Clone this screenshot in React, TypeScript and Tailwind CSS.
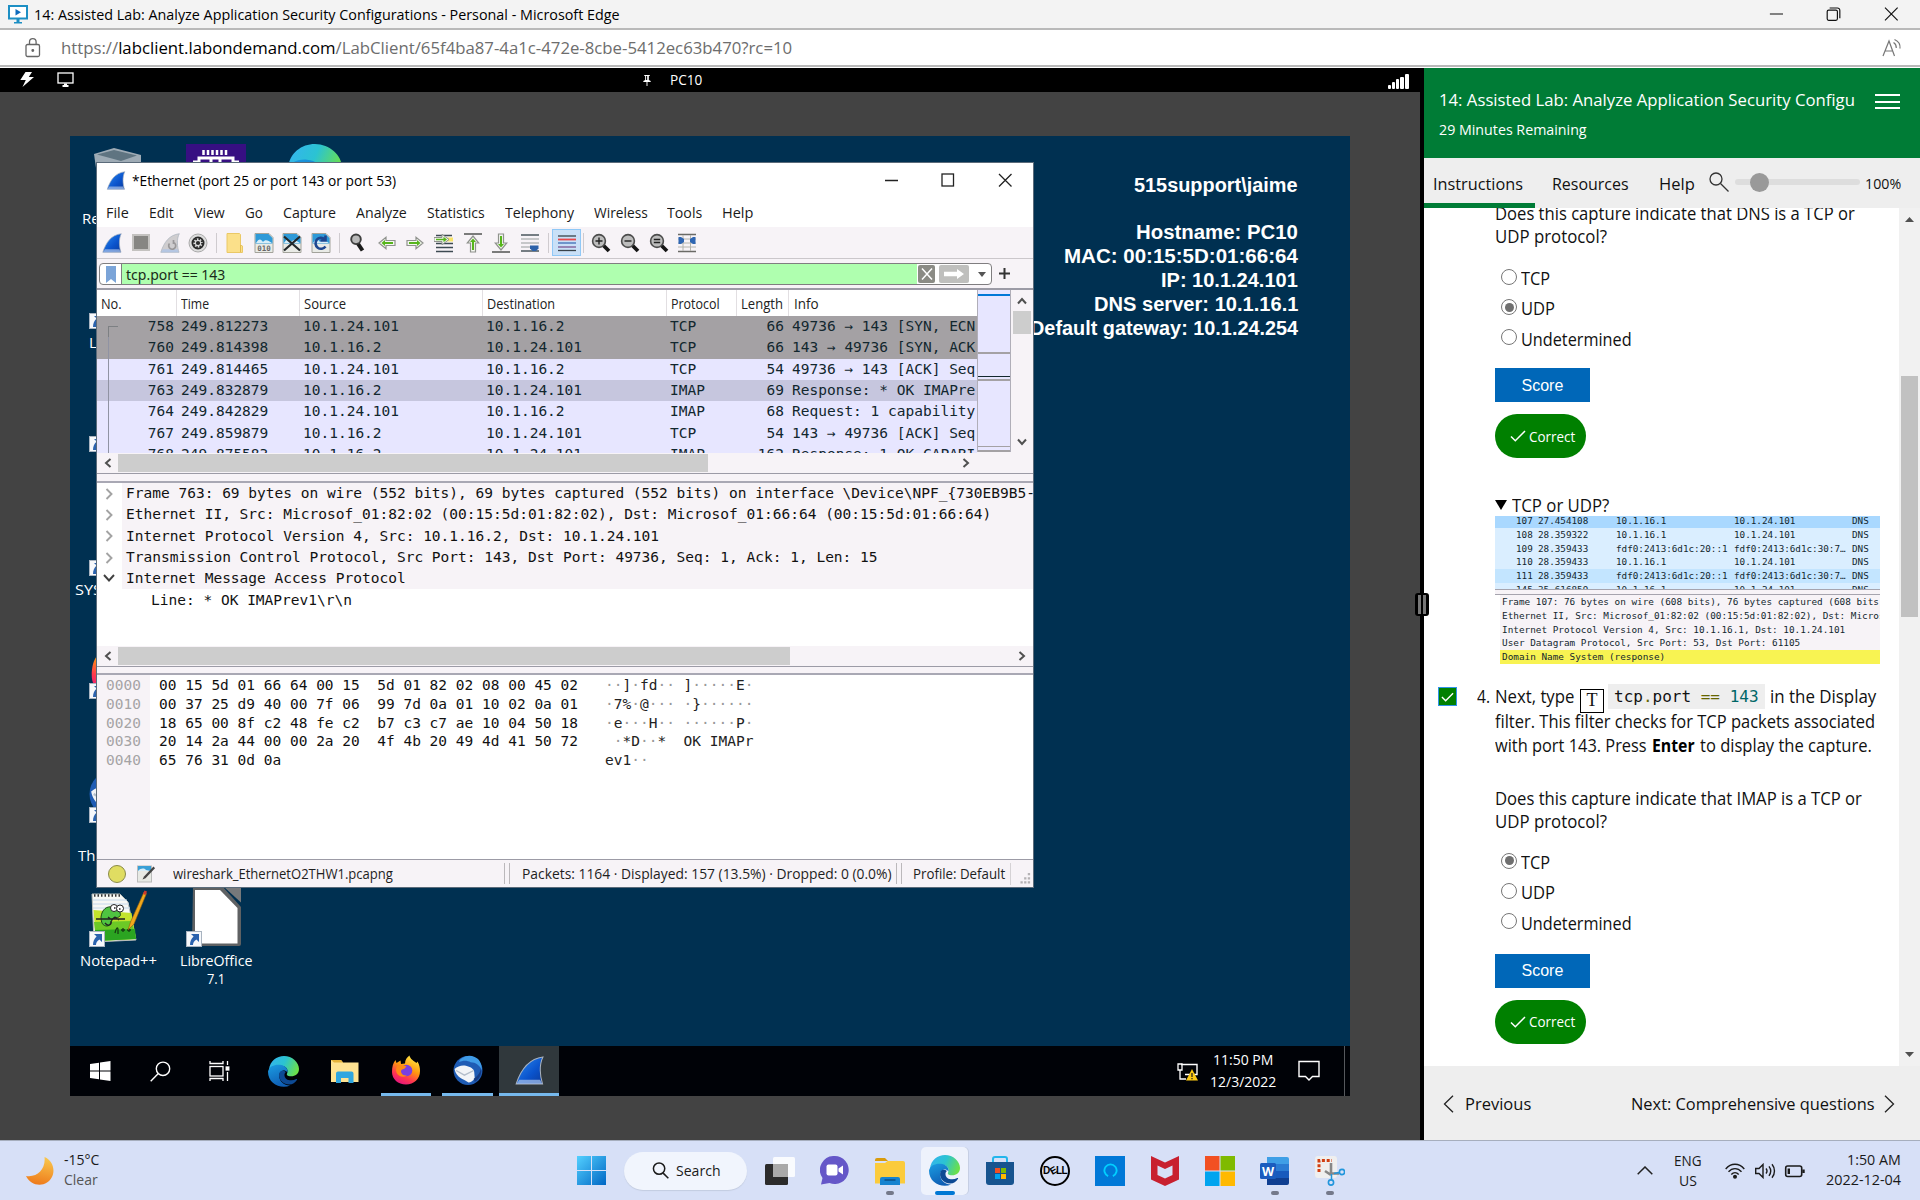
import React, { useLayoutEffect, useRef, useState, type ReactNode } from "react";

/* Text squeezed or stretched horizontally to the width of its box. */
function T({ c = "", o = "origin-left", children }: { c?: string; o?: string; children: ReactNode }) {
  const box = useRef<HTMLSpanElement>(null);
  const inner = useRef<HTMLSpanElement>(null);
  const [scale, setScale] = useState(1);
  useLayoutEffect(() => {
    if (!box.current || !inner.current) return;
    const natural = inner.current.offsetWidth;
    if (natural > 0) setScale(box.current.getBoundingClientRect().width / natural);
  }, []);
  return (
    <span ref={box} className={"inline-flex shrink-0 whitespace-pre " + c}>
      <span ref={inner} className={"inline-block shrink-0 " + o} style={{ transform: `scaleX(${scale})` }}>
        {children}
      </span>
    </span>
  );
}

const MONO = "font-['DejaVu_Sans_Mono','Liberation_Mono',monospace]";
const SANS = "font-['Open_Sans','Noto_Sans',sans-serif]";

/* ---------- shared icons ---------- */

function EdgeIcon({ c }: { c: string }) {
  return (
    <svg viewBox="0 0 32 32" className={c}>
      <defs>
        <linearGradient id="eg1" x1="0" y1="0.2" x2="1" y2="0.5">
          <stop offset="0" stopColor="#34b4ee" />
          <stop offset="0.5" stopColor="#2bc3d2" />
          <stop offset="1" stopColor="#6be04a" />
        </linearGradient>
        <linearGradient id="eg2" x1="0" y1="0" x2="0.4" y2="1">
          <stop offset="0" stopColor="#1b9de2" />
          <stop offset="1" stopColor="#0f5fb5" />
        </linearGradient>
      </defs>
      <path d="M1 14C2 5 9 0 16.500 0 25 0 32 6.500 32 13.500c0 5-4 7.500-8 7.500-4.500 0-5-2-4.300-3C21 16 20.500 10 13 10 7 10 2 13 1 20z" fill="url(#eg1)" />
      <path d="M0 16C1 10.500 7 8.500 12 9c6 .5 9 4.500 8 8-3-4-8.500-1.500-8.500 3.500C11.500 27 18 31 23 30.500 13 34.500 0 29 0 16z" fill="url(#eg2)" />
      <path d="M12 17c-2.500 6 3 12.500 10 12.500 3.500 0 6-2 8-5 .3-.6-.2-1-.8-.7C24 26.500 17 25 17 19.500c0-1.500.6-2.300 1.600-3C16 14.500 13 15 12 17z" fill="#0d4a94" />
    </svg>
  );
}

function Fin({ c, tone = "blue" }: { c: string; tone?: "blue" | "gray" }) {
  const fill = tone === "blue" ? "url(#fin)" : "#cfcdcf";
  return (
    <svg viewBox="0 0 20 20" className={c}>
      <defs>
        <linearGradient id="fin" x1="0" y1="0" x2="1" y2="1">
          <stop offset="0" stopColor="#2b8cf0" />
          <stop offset="0.6" stopColor="#0a53cc" />
          <stop offset="1" stopColor="#0c3a9a" />
        </linearGradient>
      </defs>
      <path d="M.8 19.300C4 9.500 9 2 19.300.7 16.500 6 17.200 14 19 19.300z" fill={fill} stroke="#a9b2bd" strokeWidth="0.7" />
      <path d="M1 19.300l2-3h14.300l1.500 3z" fill="#a9c3ea" opacity="0.7" />
      {tone === "gray" && <path d="M13.500 9.500a3.500 3.500 0 1 1-4 1M13.500 7v4" fill="none" stroke="#9a989a" strokeWidth="1.700" />}
    </svg>
  );
}

function FirefoxIcon({ c }: { c: string }) {
  return (
    <svg viewBox="0 0 30 30" className={c}>
      <defs>
        <linearGradient id="ff" x1="0.8" y1="0" x2="0.3" y2="1">
          <stop offset="0" stopColor="#fff04a" />
          <stop offset="0.45" stopColor="#ff980e" />
          <stop offset="0.75" stopColor="#ff3750" />
          <stop offset="1" stopColor="#e5147f" />
        </linearGradient>
      </defs>
      <path d="M1 17C1 12 2 8 4.500 5l1 3 4-2.500.5 3.500 4-.5C14 5 16 2 18.500.5 19 4 23 6 25.500 8l1-1.500C28.500 10 29 13 29 16c0 8-6 13.500-14 13.500S1 24 1 17z" fill="url(#ff)" />
      <circle cx="15.500" cy="15.500" r="5.800" fill="#7a3fe0" />
      <path d="M6 11c3-2 7-1 9.500.5L13 14c-2 0-3 1-3 2.500 0 3 3 4.500 6 4-5 3-11 0-11-6z" fill="#ff8a16" />
    </svg>
  );
}

function ThunderbirdIcon({ c }: { c: string }) {
  return (
    <svg viewBox="0 0 30 30" className={c}>
      <circle cx="15.500" cy="15" r="14" fill="#1f5cb4" />
      <path d="M10 3C14 0 18 0 22 2c5 2 7 7 7 13-2-5-6-8-11-8-3-2-8-2-11 0 0-2 1-3 3-4z" fill="#3f9be6" />
      <path d="M2.500 13.500c3-2.500 7-4 11-3 4 1 8 3 8 6l.5 6c-2 3-4 4-6 4C11 23 4 22 2.500 13.500z" fill="#f2f4f7" />
      <path d="M4 15l8 4.500L21 15" fill="none" stroke="#b3bdca" strokeWidth="1.300" />
      <path d="M22 26c5-3 7-8 6-13-1 5-4 8-7 10z" fill="#163b82" />
    </svg>
  );
}

function ShortcutBadge({ c }: { c: string }) {
  return (
    <svg viewBox="0 0 16 16" className={c}>
      <rect x=".5" y=".5" width="15" height="15" fill="#f6f8fb" stroke="#a8b3c0" />
      <path d="M5 3h8v8l-2.600-2.600C8 10 7 11.500 7 14H4c0-3.500 1.200-6 3.600-8.400z" fill="#2a62ae" />
    </svg>
  );
}

/* ---------- Edge window chrome ---------- */

function BrowserChrome() {
  return (
    <div className="h-[68px] shrink-0">
      <div className="flex h-[28px] items-center bg-[#f3f3f3] pl-[8px]">
        <svg viewBox="0 0 20 19" className="h-[19px] w-[20px]">
          <rect x="1" y="1" width="18" height="12.500" fill="#fff" stroke="#1d8fc4" strokeWidth="2" />
          <path d="M7.500 4v6.500l5.500-3.200z" fill="#0f6cbd" />
          <path d="M8.500 14h3v3h2.500v1.500H6V17h2.500z" fill="#1d8fc4" />
        </svg>
        <T c="ml-[6px] w-[586px] text-[15px] text-black">14: Assisted Lab: Analyze Application Security Configurations - Personal - Microsoft Edge</T>
        <svg viewBox="0 0 140 20" className="ml-auto mr-[18px] h-[20px] w-[136px]" fill="none" stroke="#111" strokeWidth="1.200">
          <path d="M4 10h13.500M122.500 3.500l13 13M135.500 3.500l-13 13" />
          <rect x="63" y="6" width="10.500" height="10.500" rx="1.500" />
          <path d="M65.500 3.800h8a2.500 2.500 0 0 1 2.500 2.500v8" />
        </svg>
      </div>
      <div className="h-[2px] bg-[#b9b9b9]" />
      <div className="flex h-[35px] items-center bg-white pl-[25px]">
        <svg viewBox="0 0 16 20" className="h-[20px] w-[16px]" fill="none" stroke="#666" strokeWidth="1.300">
          <rect x="1" y="6.500" width="13.500" height="12" rx="1.500" />
          <path d="M4.500 6.500V4a3.300 3.300 0 0 1 6.600 0v2.500" />
          <circle cx="7.800" cy="12.500" r="0.800" fill="#666" />
        </svg>
        <T c="ml-[20px] mt-px w-[731px] text-[16.500px] text-[#6d6d6d]">
          https://<span className="text-black">labclient.labondemand.com</span>/LabClient/65f4ba87-4a1c-472e-8cbe-5412ec63b470?rc=10
        </T>
        <svg viewBox="0 0 20 19" className="ml-auto mr-[18px] h-[19px] w-[20px]" fill="none" stroke="#777" strokeWidth="1.200">
          <path d="M1 18L7 3l5.500 15M3 13h7.500M11.500 4.500c1.800 1 2.800 3 2.800 5.500M12.500 1.500c3.500 1.500 6 4.500 5.500 9" />
        </svg>
      </div>
      <div className="h-[2px] bg-[#b9b9b9]" />
      <div className="h-[1px] bg-white" />
    </div>
  );
}

function VmBar() {
  return (
    <div className="flex h-[24px] shrink-0 items-center bg-black pb-[2px] text-white">
      <svg viewBox="0 0 14 15" className="ml-[20px] h-[15px] w-[14px]">
        <path d="M5.500 0H12L8.800 5H14L2.500 15 5.800 8H.3z" fill="#fff" />
      </svg>
      <svg viewBox="0 0 17 15" className="ml-[23px] h-[15px] w-[17px]" fill="none" stroke="#fff" strokeWidth="1.300">
        <rect x="1" y="1" width="15" height="10" />
        <path d="M5.500 14h6M7 12.500h3" strokeWidth="1.800" />
      </svg>
      <svg viewBox="0 0 10 12" className="ml-[568px] mt-[2px] h-[11px] w-[10px]">
        <path d="M2 0h6v1H7v4.500l2 1v1.200H5.500V12h-1V7.700H1V6.500l2-1V1H2z" fill="#fff" />
        <path d="M4 1h1.200v4.500H4z" fill="#000" />
      </svg>
      <T c="ml-[18px] w-[32px] text-[14px]">PC10</T>
      <div className="ml-auto mr-[12px] mt-[3px] flex h-[16px] items-end gap-[1px]">
        <i className="h-[4px] w-[3px] rounded-[1px] bg-white" />
        <i className="h-[7px] w-[3px] rounded-[1px] bg-white" />
        <i className="h-[10px] w-[3px] rounded-[1px] bg-white" />
        <i className="h-[12px] w-[4px] rounded-[1px] bg-white" />
        <i className="h-[15px] w-[4px] rounded-[1px] bg-white" />
      </div>
      <div className="w-[3px]" />
    </div>
  );
}

/* ---------- Wireshark ---------- */

const menu: [string, string][] = [
  ["File", "w-[23px]"],
  ["Edit", "w-[25px]"],
  ["View", "w-[31px]"],
  ["Go", "w-[18px]"],
  ["Capture", "w-[53px]"],
  ["Analyze", "w-[51px]"],
  ["Statistics", "w-[58px]"],
  ["Telephony", "w-[69px]"],
  ["Wireless", "w-[54px]"],
  ["Tools", "w-[35px]"],
  ["Help", "w-[31px]"],
];

function Slot({ children, on }: { children: ReactNode; on?: boolean }) {
  return (
    <div className={"flex h-[27px] w-[28.700px] shrink-0 items-center justify-center " + (on ? "border border-[#90c8f6] bg-[#c9e0f7]" : "")}>
      {children}
    </div>
  );
}
function Sep() {
  return (
    <div className="flex h-[20px] w-[8px] shrink-0 justify-center">
      <i className="w-[1px] bg-[#cfcbcf]" />
    </div>
  );
}
const ic = "h-[20px] w-[20px]";

function Doc({ kind }: { kind: "bin" | "x" | "reload" }) {
  return (
    <svg viewBox="0 0 20 20" className={ic}>
      <path d="M1 .5h14l4 4v15H1z" fill="#e9ebe6" stroke="#a3a39b" />
      <path d="M1.500 1h13l4 4v5.500h-17z" fill="#2f9ad8" />
      <path d="M2 10c3-5 5-4 7-1 2-3 5-2 9 1z" fill="#d8edf8" />
      {kind === "bin" && (
        <text x="10" y="17.500" fontSize="7.500" textAnchor="middle" fontWeight="bold" fill="#666" fontFamily="DejaVu Sans Mono">010</text>
      )}
      {kind === "x" && <path d="M2 3.500l16 14M18 3.500l-16 14" stroke="#22282b" strokeWidth="2.200" />}
      {kind === "reload" && <path d="M14.500 13.500a5.500 5.500 0 1 1-1-7.500M14.500 2.500v5h-5" fill="none" stroke="#1d4790" strokeWidth="2.600" />}
    </svg>
  );
}

function Arrow({ dir }: { dir: "left" | "right" | "up" | "down" }) {
  const rot = { left: "rotate-180", right: "rotate-0", up: "-rotate-90", down: "rotate-90" }[dir];
  return (
    <svg viewBox="0 0 18 14" className={"h-[14px] w-[18px] shrink-0 " + rot}>
      <path d="M1 4.500h9V1.300L17 7l-7 5.700V9.500H1z" fill="#f4f7f0" stroke="#8f928d" strokeWidth="1.200" />
      <path d="M3 6h8V4l3.500 3L11 10V8H3z" fill="#57b51c" />
    </svg>
  );
}

function Lens({ kind }: { kind: "in" | "out" | "eq" }) {
  return (
    <svg viewBox="0 0 20 20" className={ic} fill="none">
      <path d="M12 12l6 6" stroke="#151515" strokeWidth="3.800" />
      <circle cx="8" cy="8" r="6.400" fill="#bdbdbd" stroke="#4c4c4c" strokeWidth="1.600" />
      <path d={kind === "in" ? "M4.500 8h7M8 4.500v7" : kind === "out" ? "M4.500 8h7" : "M4.800 6.500h6.400M4.800 9.500h6.400"} stroke="#222" strokeWidth="1.400" />
    </svg>
  );
}

function Toolbar() {
  return (
    <div className="flex h-[31px] shrink-0 items-center bg-[#f7f3f7] pl-px">
      <Slot><Fin c={ic} /></Slot>
      <Slot><i className="h-[17px] w-[18px] border-2 border-[#c4c2c0] bg-[#878683]" /></Slot>
      <Slot><Fin c={ic} tone="gray" /></Slot>
      <Slot>
        <svg viewBox="0 0 20 20" className={ic} fill="none">
          <circle cx="10" cy="10" r="9" fill="#ddd" stroke="#aaa" />
          <circle cx="10" cy="10" r="5.600" stroke="#2a2a2a" strokeWidth="1.800" />
          <circle cx="10" cy="10" r="4.200" stroke="#2a2a2a" strokeWidth="2" strokeDasharray="1.600 1.700" />
          <circle cx="10" cy="10" r="2.100" fill="#2a2a2a" />
        </svg>
      </Slot>
      <Sep />
      <Slot>
        <svg viewBox="0 0 18 20" className="h-[20px] w-[18px]">
          <path d="M1 .5h12.500l1 1V12l2 1v6.500H1z" fill="#fbe08a" stroke="#eac866" />
          <path d="M14.500 12v7" stroke="#e2bb4f" />
        </svg>
      </Slot>
      <Slot><Doc kind="bin" /></Slot>
      <Slot><Doc kind="x" /></Slot>
      <Slot><Doc kind="reload" /></Slot>
      <Sep />
      <Slot>
        <svg viewBox="0 0 20 20" className={ic}>
          <path d="M9.500 10l5 7.500" stroke="#1b1b1b" strokeWidth="4" />
          <circle cx="8" cy="6.300" r="4.800" fill="#b9b9b9" stroke="#3e3e3e" strokeWidth="1.900" />
        </svg>
      </Slot>
      <Slot><Arrow dir="left" /></Slot>
      <Slot><Arrow dir="right" /></Slot>
      <Slot>
        <svg viewBox="0 0 20 20" className={ic}>
          <path d="M2 2.500h16M2 14.500h17M2 18.500h17M2 10.500h17" stroke="#3d4a52" strokeWidth="1.300" />
          <path d="M12 4.500h7v4h-7z" fill="#f8e46a" />
          <path d="M0 4.500h8V1.300L15 6.500l-7 5.200V8.500H0z" fill="#f4f7f0" stroke="#8f928d" />
          <path d="M2 5.700h7.500v-2L13 6.500 9.500 9.300v-2H2z" fill="#57b51c" />
        </svg>
      </Slot>
      <Slot>
        <div className="flex h-[20px] flex-col items-center">
          <i className="h-[2px] w-[18px] bg-[#7b7b7b]" />
          <div className="flex h-[18px] w-[18px] items-center justify-center"><Arrow dir="up" /></div>
        </div>
      </Slot>
      <Slot>
        <div className="flex h-[20px] flex-col items-center">
          <div className="flex h-[18px] w-[18px] items-center justify-center"><Arrow dir="down" /></div>
          <i className="h-[2px] w-[18px] bg-[#7b7b7b]" />
        </div>
      </Slot>
      <Slot>
        <svg viewBox="0 0 20 20" className={ic}>
          <path d="M1 2h18" stroke="#4a565c" strokeWidth="1.500" />
          <path d="M1 6h18M1 10h18M1 14h10" stroke="#b7b9ba" strokeWidth="1.500" />
          <path d="M1 18h18" stroke="#4a565c" strokeWidth="1.500" />
          <path d="M10 12.500h8.500v3L16 18h-3.500L10 15.500z" fill="#2d62aa" />
        </svg>
      </Slot>
      <Sep />
      <Slot on>
        <svg viewBox="0 0 20 20" className={ic} strokeWidth="1.300">
          <path d="M1 3h18" stroke="#38434a" />
          <path d="M1 6.500h18" stroke="#e8474b" strokeWidth="1.800" />
          <path d="M1 10h18" stroke="#3d6cb4" />
          <path d="M1 14h18" stroke="#7a5591" />
          <path d="M1 17.500h18" stroke="#38434a" />
        </svg>
      </Slot>
      <div className="-ml-[2px] flex items-center">
        <Sep />
        <Slot><Lens kind="in" /></Slot>
        <Slot><Lens kind="out" /></Slot>
        <Slot><Lens kind="eq" /></Slot>
        <Slot>
          <svg viewBox="0 0 20 20" className={ic}>
            <path d="M1 1.500h18M1 18.500h18" stroke="#6a6a66" strokeWidth="1.400" />
            <path d="M1 6h18M1 10h18M1 14h18M6 2v16M13.500 2v16" stroke="#b4b4ae" />
            <path d="M1.500 4v7h2.500L7 9V6L4 4zM18.500 4v7H16l-3-2V6l3-2z" fill="#2f66b3" />
          </svg>
        </Slot>
      </div>
    </div>
  );
}

function FilterRow() {
  return (
    <div className="flex h-[30px] shrink-0 border-t border-[#cbc7cb] bg-[#f7f3f7] pl-[2px] pt-[4px]">
      <div className="flex h-[22px] w-[893px] overflow-hidden rounded-[4px] border border-[#807e80] bg-white">
        <div className="flex w-[22px] shrink-0 items-center justify-center border-r border-[#807e80]">
          <svg viewBox="0 0 10 17" className="h-[17px] w-[10px]"><path d="M0 0h10v17l-5-4-5 4z" fill="#7ba4d8" /></svg>
        </div>
        <div className="flex w-[795px] shrink-0 items-center bg-[#afffaf] pl-[4px]">
          <T c="w-[99px] text-[14px] text-[#1a2b1a] font-['Noto_Sans',sans-serif]">tcp.port == 143</T>
        </div>
        <div className="ml-[1px] mt-[1px] flex h-[18px] w-[17px] shrink-0 items-center justify-center rounded-[2px] bg-[#8b8b85]">
          <svg viewBox="0 0 14 14" className="h-[14px] w-[14px]"><path d="M2 1.500l10 11M12 1.500L2 12.500" stroke="#fff" strokeWidth="1.500" /></svg>
        </div>
        <div className="ml-[4px] mt-[1px] flex h-[18px] w-[30px] shrink-0 items-center justify-center rounded-[2px] bg-[#bfbfbd]">
          <svg viewBox="0 0 22 10" className="h-[10px] w-[22px]"><path d="M1 2.800h13V0l7 5-7 5V7.200H1z" fill="#fff" /></svg>
        </div>
        <div className="flex w-[22px] shrink-0 items-center justify-center pl-[4px]">
          <svg viewBox="0 0 8 5" className="h-[5px] w-[8px]"><path d="M0 0h8L4 5z" fill="#555" /></svg>
        </div>
      </div>
      <svg viewBox="0 0 11 11" className="ml-[7px] mt-[5px] h-[11px] w-[11px]"><path d="M5.500 0v11M0 5.500h11" stroke="#333" strokeWidth="2" /></svg>
    </div>
  );
}

const packets: [string, string, string, string, string, string, string, string][] = [
  ["758", "249.812273", "10.1.24.101", "10.1.16.2", "TCP", "66", "49736 → 143 [SYN, ECN", "bg-[#a4a1a4]"],
  ["760", "249.814398", "10.1.16.2", "10.1.24.101", "TCP", "66", "143 → 49736 [SYN, ACK", "bg-[#a4a1a4]"],
  ["761", "249.814465", "10.1.24.101", "10.1.16.2", "TCP", "54", "49736 → 143 [ACK] Seq", "bg-[#e7e6ff]"],
  ["763", "249.832879", "10.1.16.2", "10.1.24.101", "IMAP", "69", "Response: * OK IMAPre", "bg-[#c6c6de]"],
  ["764", "249.842829", "10.1.24.101", "10.1.16.2", "IMAP", "68", "Request: 1 capability", "bg-[#e7e6ff]"],
  ["767", "249.859879", "10.1.16.2", "10.1.24.101", "TCP", "54", "143 → 49736 [ACK] Seq", "bg-[#e7e6ff]"],
  ["768", "249.875583", "10.1.16.2", "10.1.24.101", "IMAP", "162", "Response: 1 OK CAPABI", "bg-[#e7e6ff]"],
];

function Chev({ d }: { d: "left" | "right" | "up" | "down" }) {
  const rot = { left: "rotate-180", right: "rotate-0", up: "-rotate-90", down: "rotate-90" }[d];
  return (
    <svg viewBox="0 0 8 10" className={"h-[10px] w-[8px] " + rot} fill="none">
      <path d="M1.500 1L6 5 1.500 9" stroke="#505050" strokeWidth="2" />
    </svg>
  );
}

function PacketTable() {
  return (
    <div className="flex h-[163px] shrink-0">
      <div className="w-[880px] overflow-hidden">
        <div className="flex h-[26px] items-center bg-white text-[14px] text-[#222]">
          <div className="flex h-full w-[80px] items-center border-r border-[#e2dfe2] pl-[4px]"><T c="w-[21px]">No.</T></div>
          <div className="flex h-full w-[123px] items-center border-r border-[#e2dfe2] pl-[4px]"><T c="w-[28px]">Time</T></div>
          <div className="flex h-full w-[183px] items-center border-r border-[#e2dfe2] pl-[4px]"><T c="w-[42px]">Source</T></div>
          <div className="flex h-full w-[184px] items-center border-r border-[#e2dfe2] pl-[4px]"><T c="w-[68px]">Destination</T></div>
          <div className="flex h-full w-[70px] items-center border-r border-[#e2dfe2] pl-[4px]"><T c="w-[49px]">Protocol</T></div>
          <div className="flex h-full w-[52px] items-center border-r border-[#e2dfe2] pl-[4px]"><T c="w-[42px]">Length</T></div>
          <div className="flex h-full items-center pl-[5px]"><T c="w-[25px]">Info</T></div>
        </div>
        <div className={"h-[137px] overflow-hidden text-[14.500px] text-[#12272e] " + MONO}>
          {packets.map((p, i) => (
            <div key={p[0]} className={"flex h-[21.300px] items-center whitespace-pre leading-[21px] " + p[7]}>
              <div className="flex h-full w-[11px] shrink-0 items-end">
              </div>
              {i === 0 ? (
                <i className="h-[11px] w-[10px] shrink-0 self-end border-t border-l border-[#7d8083]" />
              ) : (
                <i className="h-full w-[10px] shrink-0 border-l border-[#9093a3]" />
              )}
              <span className="w-[56px] shrink-0 text-right">{p[0]}</span>
              <span className="w-[122px] shrink-0 pl-[7px]">{p[1]}</span>
              <span className="w-[183px] shrink-0 pl-[7px]">{p[2]}</span>
              <span className="w-[184px] shrink-0 pl-[7px]">{p[3]}</span>
              <span className="w-[63px] shrink-0 pl-[7px]">{p[4]}</span>
              <span className="w-[61px] shrink-0 pr-[3px] text-right">{p[5]}</span>
              <span className="shrink-0 pl-[5px]">{p[6]}</span>
            </div>
          ))}
        </div>
      </div>
      <div className="flex h-[162px] w-[34px] shrink-0 flex-col border-x border-[#b0aeb8] bg-[#e7e6ff]">
        <i className="mt-[4px] h-[2px] bg-[#0078d7]" />
        <i className="mt-[56px] h-[2px] bg-[#a4a1a4]" />
        <i className="mt-[22px] h-[1px] bg-[#12272e]" />
        <i className="mt-[2px] h-[2px] bg-[#a4a1a4]" />
        <i className="mt-[65px] h-[1px] bg-[#a4a1a4]" />
        <i className="mt-[3px] h-[2px] bg-[#a4a1a4]" />
      </div>
      <div className="flex w-[21px] flex-col items-center bg-[#f7f3f7]">
        <div className="flex h-[21px] items-center"><Chev d="up" /></div>
        <i className="h-[23px] w-[18px] bg-[#cdcdcd]" />
        <div className="mt-auto flex h-[22px] items-center"><Chev d="down" /></div>
      </div>
    </div>
  );
}

const details: [boolean, string][] = [
  [false, "Frame 763: 69 bytes on wire (552 bits), 69 bytes captured (552 bits) on interface \\Device\\NPF_{730EB9B5-"],
  [false, "Ethernet II, Src: Microsof_01:82:02 (00:15:5d:01:82:02), Dst: Microsof_01:66:64 (00:15:5d:01:66:64)"],
  [false, "Internet Protocol Version 4, Src: 10.1.16.2, Dst: 10.1.24.101"],
  [false, "Transmission Control Protocol, Src Port: 143, Dst Port: 49736, Seq: 1, Ack: 1, Len: 15"],
  [true, "Internet Message Access Protocol"],
];

const hex: [string, string, string][] = [
  ["0000", "00 15 5d 01 66 64 00 15  5d 01 82 02 08 00 45 02", "··]·fd·· ]·····E·"],
  ["0010", "00 37 25 d9 40 00 7f 06  99 7d 0a 01 10 02 0a 01", "·7%·@··· ·}······"],
  ["0020", "18 65 00 8f c2 48 fe c2  b7 c3 c7 ae 10 04 50 18", "·e···H·· ······P·"],
  ["0030", "20 14 2a 44 00 00 2a 20  4f 4b 20 49 4d 41 50 72", " ·*D··*  OK IMAPr"],
  ["0040", "65 76 31 0d 0a", "ev1··"],
];

function Wireshark() {
  return (
    <div className={"flex h-[726px] w-[938px] flex-col overflow-hidden border border-[#5b6b7a] bg-[#f7f3f7] " + SANS}>
      <div className="flex h-[35px] shrink-0 items-center bg-white pl-[9px]">
        <Fin c="h-[19px] w-[20px]" />
        <T c="ml-[6px] w-[264px] text-[15px] text-black">*Ethernet (port 25 or port 143 or port 53)</T>
        <svg viewBox="0 0 130 14" className="mb-[2px] ml-auto mr-[20px] h-[14px] w-[130px]" fill="none" stroke="#222" strokeWidth="1.300">
          <path d="M2 7.500h13M116 1l12.500 12.500M128.500 1L116 13.500" />
          <rect x="59" y="1" width="11.500" height="12" />
        </svg>
      </div>
      <div className="flex h-[29px] shrink-0 items-center gap-[19.950px] bg-white pl-[9px] text-[15px] text-[#1a1a1a]">
        {menu.map(([t, w]) => <T key={t} c={w}>{t}</T>)}
      </div>
      <Toolbar />
      <FilterRow />
      <div className="h-[2px] shrink-0 bg-[#9c9ba6]" />
      <PacketTable />
      <div className="flex h-[20px] shrink-0 items-center">
        <div className="flex w-[21px] justify-center"><Chev d="left" /></div>
        <i className="h-[18px] w-[590px] bg-[#cdcdcd]" />
        <div className="ml-[254px]"><Chev d="right" /></div>
      </div>
      <div className="h-[1px] shrink-0 bg-[#9c9ba6]" />
      <div className="h-[7px] shrink-0" />
      <div className="h-[2px] shrink-0 bg-[#a9a8b4]" />
      <div className={"h-[163px] shrink-0 bg-white text-[14.530px] text-[#111] " + MONO}>
        {details.map(([open, t]) => (
          <div key={t} className="flex h-[21.300px] items-center whitespace-pre leading-[21px]">
            <div className="flex w-[25px] shrink-0 justify-center pr-px">
              <svg viewBox="0 0 12 12" className="h-[12px] w-[12px]" fill="none" strokeWidth="1.900">
                {open ? <path d="M1 2l5 5.500L11 2" stroke="#404040" /> : <path d="M3.500 1l5 5-5 5" stroke="#a3a3a3" />}
              </svg>
            </div>
            <div className="h-full grow overflow-hidden bg-[#f7f3f7] pl-[4px]">{t}</div>
          </div>
        ))}
        <div className="pl-[54px] leading-[22px]">{"Line: * OK IMAPrev1\\r\\n"}</div>
      </div>
      <div className="flex h-[20px] shrink-0 items-center">
        <div className="flex w-[21px] justify-center"><Chev d="left" /></div>
        <i className="h-[18px] w-[672px] bg-[#cdcdcd]" />
        <div className="ml-[228px]"><Chev d="right" /></div>
      </div>
      <div className="h-[1px] shrink-0 bg-[#9c9ba6]" />
      <div className="h-[6px] shrink-0" />
      <div className="h-[2px] shrink-0 bg-[#a9a8b4]" />
      <div className={"flex h-[184px] shrink-0 bg-white text-[14.500px] leading-[18.750px] " + MONO}>
        <div className="w-[53px] shrink-0 bg-[#f7f3f7] pl-[9px] pt-[1px] text-[#a5a3a5]">
          {hex.map((h) => <div key={h[0]}>{h[0]}</div>)}
        </div>
        <div className="w-[447px] shrink-0 whitespace-pre pl-[9px] pt-[1px] text-[#111]">
          {hex.map((h) => <div key={h[0]}>{h[1]}</div>)}
        </div>
        <div className="whitespace-pre pl-[8px] pt-[1px] text-[#222]">
          {hex.map((h) => (
            <div key={h[0]}>
              {h[2].split("").map((ch, i) => <span key={i} className={ch === "·" ? "text-[#999]" : ""}>{ch}</span>)}
            </div>
          ))}
        </div>
      </div>
      <div className="h-[1px] shrink-0 bg-[#9c9ba6]" />
      <div className="flex grow items-center text-[14px] text-[#1e1e1e]">
        <i className="ml-[11px] h-[18px] w-[18px] shrink-0 rounded-full border border-[#8a8a4a] bg-[#e0dd62]" />
        <svg viewBox="0 0 18 18" className="ml-[11px] h-[18px] w-[18px] shrink-0">
          <rect x=".5" y="1" width="14" height="16" fill="#e7e9e4" stroke="#bbb" />
          <path d="M1 1h13v5H1z" fill="#3a9fd6" />
          <path d="M1 6c3-3 6-3 8-1l5 1z" fill="#d8edf8" />
          <path d="M16.500 1.500L7 11.500l-1.500 3 3-1.200 9.500-10z" fill="#444" />
        </svg>
        <T c="ml-[18px] w-[220px]">wireshark_EthernetO2THW1.pcapng</T>
        <i className="ml-[111px] h-[21px] w-[6px] shrink-0 border-x border-[#bbb8bb]" />
        <T c="ml-[12px] w-[370px]">Packets: 1164 · Displayed: 157 (13.5%) · Dropped: 0 (0.0%)</T>
        <i className="ml-[4px] h-[21px] w-[6px] shrink-0 border-x border-[#bbb8bb]" />
        <T c="ml-[11px] w-[92px]">Profile: Default</T>
        <i className="ml-[5px] h-[22px] w-px shrink-0 bg-[#d5d2d5]" />
        <svg viewBox="0 0 12 12" className="ml-[9px] mt-[10px] h-[11px] w-[11px] shrink-0" fill="#b5b2b5">
          <path d="M8.500 0h2.500v2.500H8.500zM8.500 4.500h2.500v2.500H8.500zM8.500 9h2.500v2.500H8.500zM4.500 4.500H7v2.500H4.500zM4.500 9H7v2.500H4.500zM.5 9H3v2.500H.5z" />
        </svg>
      </div>
    </div>
  );
}

/* ---------- virtual machine desktop ---------- */

function VmTaskbar() {
  return (
    <div className="flex h-[50px] shrink-0 items-center bg-[#000207] text-white">
      <svg viewBox="0 0 21 20" className="ml-[20px] h-[20px] w-[21px]" fill="#fff">
        <path d="M0 3l9-1.300v7.800H0zM10 1.500L20.500 0v9.500H10zM0 10.500h9v7.800L0 17zM10 10.500h10.500V20L10 18.500z" />
      </svg>
      <svg viewBox="0 0 21 21" className="ml-[39px] h-[21px] w-[21px]" fill="none" stroke="#fff" strokeWidth="1.400">
        <circle cx="13" cy="7.800" r="6.700" />
        <path d="M8.300 12.600L.7 20.300" />
      </svg>
      <svg viewBox="0 0 21 20" className="ml-[38px] h-[20px] w-[21px]" fill="none" stroke="#fff" strokeWidth="1.300">
        <rect x="1" y="5.500" width="13" height="9.500" />
        <path d="M1 0v2.500h13V0M1 20v-2.500h13V20M18.500 0v4M18.500 11v9" />
        <rect x="17.200" y="6" width="2.600" height="3" fill="#fff" />
      </svg>
      <EdgeIcon c="ml-[38px] h-[31px] w-[31px]" />
      <svg viewBox="0 0 28 24" className="ml-[32px] h-[24px] w-[28px]">
        <path d="M0 1h10l2 2.500h15.500V23H0z" fill="#ffe392" />
        <path d="M0 1h10l2 2.500H3z" fill="#e6b33a" />
        <path d="M5 24V14.500a2 2 0 0 1 2-2h13.500a2 2 0 0 1 2 2V24h-5v-5h-7.500v5z" fill="#2fa6e0" />
      </svg>
      <div className="ml-[22px] flex h-full w-[50px] flex-col items-center border-b-[3px] border-[#76b9ed] pt-[9px]">
        <FirefoxIcon c="h-[30px] w-[30px]" />
      </div>
      <div className="ml-[11px] flex h-full w-[51px] flex-col items-center border-b-[3px] border-[#76b9ed] pt-[9px]">
        <ThunderbirdIcon c="h-[31px] w-[31px]" />
      </div>
      <div className="ml-[6px] flex h-full w-[60px] flex-col items-center border-b-[3px] border-[#76b9ed] bg-[#30383c] pt-[10px]">
        <Fin c="h-[29px] w-[31px]" />
      </div>
      <svg viewBox="0 0 22 19" className="ml-auto mr-[11px] h-[19px] w-[22px]" fill="none">
        <path d="M4 2.500h16v10H8" stroke="#fff" strokeWidth="1.400" />
        <path d="M1 2h4v6H1zM3 8v9h6" stroke="#fff" strokeWidth="1.300" />
        <path d="M15 7l6 11.500H9z" fill="#fbc915" />
        <path d="M15 11v4M15 16v1.300" stroke="#222" strokeWidth="1.300" />
      </svg>
      <div className={"flex w-[66px] flex-col items-center text-[14px] leading-[22px] " + SANS}>
        <T c="w-[60px]">11:50 PM</T>
        <T c="w-[66px]">12/3/2022</T>
      </div>
      <svg viewBox="0 0 22 22" className="ml-[22px] mr-[24px] h-[22px] w-[22px]" fill="none" stroke="#fff" strokeWidth="1.400">
        <path d="M1 1.500h20v15h-6.500L11 20l-3.500-3.500H1z" />
      </svg>
      <i className="mr-[5px] h-full w-px bg-[#55585c]" />
    </div>
  );
}

function VmDesktop() {
  return (
    <div className={"relative ml-[70px] mt-[44px] flex h-[960px] w-[1280px] shrink-0 flex-col overflow-hidden bg-[#003051] text-white " + SANS}>
      <div className="relative grow">
        <svg viewBox="0 0 48 20" className="absolute left-[24px] top-[12px] h-[20px] w-[48px]">
          <path d="M0 6L20 0l27 7v13H2z" fill="#9eabb5" />
          <path d="M3 6.500L20 2l23 5.500-16 5.500z" fill="#5f7481" />
        </svg>
        <svg viewBox="0 0 60 40" className="absolute left-[116px] top-[8px] h-[40px] w-[60px]">
          <path d="M0 0h60v40H0z" fill="#370f82" />
          <path d="M17.500 6v5M22 6v5M26.500 6v5M31 6v5M35.500 6v5M40 6v5" stroke="#fff" strokeWidth="2.500" />
          <path d="M13 30V14h34v16M25 14v9M34 14v9M7 18h5M48 18h5" fill="none" stroke="#fff" strokeWidth="3" />
        </svg>
        <EdgeIcon c="absolute left-[216px] top-[8px] h-[56px] w-[56px]" />
        <span className="absolute left-[12px] top-[71px] text-[15px]">Re</span>
        <span className="absolute left-[19px] top-[195px] text-[15px]">L</span>
        <span className="absolute left-[5px] top-[442px] text-[15px]"><T c="w-[36px]">SYST</T></span>
        <span className="absolute left-[8px] top-[708px] text-[15px]">Th</span>
        <FirefoxIcon c="absolute left-[20px] top-[510px] h-[52px] w-[52px]" />
        <ThunderbirdIcon c="absolute left-[17px] top-[633px] h-[50px] w-[50px]" />
        <ShortcutBadge c="absolute left-[19px] top-[177px] h-[16px] w-[16px]" />
        <ShortcutBadge c="absolute left-[19px] top-[300px] h-[16px] w-[16px]" />
        <ShortcutBadge c="absolute left-[19px] top-[424px] h-[16px] w-[16px]" />
        <ShortcutBadge c="absolute left-[19px] top-[547px] h-[16px] w-[16px]" />
        <ShortcutBadge c="absolute left-[19px] top-[671px] h-[16px] w-[16px]" />
        <svg viewBox="0 0 56 54" className="absolute left-[21px] top-[754px] h-[54px] w-[56px]">
          <path d="M1 4h28l8 8 8 38-42 2z" fill="#f7f8f5" stroke="#b8bcb8" />
          <path d="M2 10h34M2 14h36M2 18h37" stroke="#c6d8ea" />
          <path d="M2.500 20l38 3 4.500 26-40 2z" fill="#c3e32c" />
          <path d="M3 32l38-1 4 18-40 2z" fill="#6cc926" />
          <path d="M4 40l40-1 1 10-40 2z" fill="#2ba421" />
          <path d="M3 5.500h26" stroke="#333" strokeWidth="2.500" strokeDasharray="1.500 2" />
          <path d="M10 27c1-8 6-11 11-10 4-1 9 1 8 6 2 4-3 5-7 5-2 2-2 8-6 8s-6-3-6-9z" fill="#4fc341" stroke="#1d4a18" strokeWidth="1" />
          <circle cx="23" cy="18" r="3.500" fill="#fff" stroke="#222" />
          <circle cx="29" cy="18.500" r="3.500" fill="#fff" stroke="#222" />
          <path d="M23 18h1.500M28 19h1.500M14 33c3 4 7 2 6-2M5 29h29M17 27l4 3 3-3 4 3" stroke="#222" strokeWidth="1.300" fill="none" />
          <path d="M24 43c1-5 3-7 3-3v4M30 40h4M32 38v4M36 40h4M38 38v4" stroke="#173d12" strokeWidth="1.300" fill="none" />
          <path d="M37 40l2.500-8L53 2l2.500 1.500L43 34z" fill="#f0a81c" stroke="#8d5d10" strokeWidth=".6" />
          <path d="M52 4l1.500-3.500 2.500 1L54.500 5z" fill="#cf3a2c" />
        </svg>
        <ShortcutBadge c="absolute left-[19px] top-[795px] h-[16px] w-[16px]" />
        <span className="absolute left-[10px] top-[813px] text-[15px]"><T c="w-[77px]">Notepad++</T></span>
        <svg viewBox="0 0 52 60" className="absolute left-[120px] top-[751px] h-[60px] w-[52px]">
          <path d="M3 0h30l18 20v37a2 2 0 0 1-2 2H4a2 2 0 0 1-2-2z" fill="#5f6163" />
          <path d="M5 3h25l17.500 18v35.500H5z" fill="#fff" />
          <path d="M34 0h17v15.500z" fill="#77797b" />
        </svg>
        <ShortcutBadge c="absolute left-[116px] top-[795px] h-[16px] w-[16px]" />
        <span className="absolute left-[110px] top-[813px] text-[15px]"><T c="w-[73px]">LibreOffice</T></span>
        <span className="absolute left-[137px] top-[831px] text-[15px]"><T c="w-[18px]">7.1</T></span>

        <div className="absolute right-[52px] top-[37px] flex flex-col items-end text-[20px] font-bold leading-[24px] font-['Liberation_Sans',sans-serif]">
          <T c="w-[164px]">{"515support\\jaime"}</T>
          <T c="mt-[23px] w-[162px]">Hostname: PC10</T>
          <T c="w-[234px]">MAC: 00:15:5D:01:66:64</T>
          <T c="w-[137px]">IP: 10.1.24.101</T>
          <T c="w-[204px]">DNS server: 10.1.16.1</T>
          <T c="w-[268px]">Default gateway: 10.1.24.254</T>
        </div>
        <div className="absolute left-[26px] top-[26px]"><Wireshark /></div>
      </div>
      <VmTaskbar />
    </div>
  );
}

/* ---------- lab instructions ---------- */

function Radio({ on }: { on?: boolean }) {
  return (
    <i className="mb-[4px] flex h-[16px] w-[16px] shrink-0 items-center justify-center rounded-full border-[1.500px] border-[#767676] bg-white">
      {on && <i className="h-[9px] w-[9px] rounded-full bg-[#6f6f6f]" />}
    </i>
  );
}

function Choices({ pick }: { pick: number }) {
  const opts: [string, string][] = [["TCP", "w-[29px]"], ["UDP", "w-[34px]"], ["Undetermined", "w-[111px]"]];
  return (
    <div className="pl-[6px]">
      {opts.map(([t, w], i) => (
        <div key={t} className="flex h-[30.300px] items-center gap-[4px]">
          <Radio on={i === pick} />
          <T c={w}>{t}</T>
        </div>
      ))}
    </div>
  );
}

function ScoreAndResult() {
  return (
    <>
      <div className="flex h-[34px] w-[95px] items-center justify-center bg-[#0067b8] text-[16px] text-white font-['Liberation_Sans',sans-serif]">
        <T c="w-[42px]">Score</T>
      </div>
      <div className="mt-[12px] flex h-[44px] w-[91px] items-center rounded-[22px] bg-[#008000] pl-[15px] text-[14px] text-white">
        <svg viewBox="0 0 16 12" className="h-[12px] w-[16px]" fill="none"><path d="M1 6.500l4.300 4.300L15 1" stroke="#fff" strokeWidth="1.500" /></svg>
        <T c="ml-[3px] w-[46px]">Correct</T>
      </div>
    </>
  );
}

const dns: [string, string, string, string, string][] = [
  ["107", "27.454108", "10.1.16.1", "10.1.24.101", "bg-[#a9d8ff]"],
  ["108", "28.359322", "10.1.16.1", "10.1.24.101", "bg-[#daeeff]"],
  ["109", "28.359433", "fdf0:2413:6d1c:20::1", "fdf0:2413:6d1c:30:7…", "bg-[#daeeff]"],
  ["110", "28.359433", "10.1.16.1", "10.1.24.101", "bg-[#daeeff]"],
  ["111", "28.359433", "fdf0:2413:6d1c:20::1", "fdf0:2413:6d1c:30:7…", "bg-[#c3e5ff]"],
  ["145", "35.616859", "10.1.16.1", "10.1.24.101", "bg-[#daeeff]"],
];

function CaptureSample() {
  return (
    <div className={"h-[148px] w-[385px] overflow-hidden whitespace-pre text-[9.280px] text-[#12272e] " + MONO}>
      <div className="h-[73px] overflow-hidden">
        {dns.map((r, i) => (
          <div key={r[0]} className={"flex leading-[13.650px] " + r[4] + (i === 0 ? " -mt-[2px]" : "")}>
            <span className="w-[43px] shrink-0 pl-[21px]">{r[0]}</span>
            <span className="w-[78px] shrink-0">{r[1]}</span>
            <span className="w-[118px] shrink-0">{r[2]}</span>
            <span className="w-[118px] shrink-0">{r[3]}</span>
            <span>DNS</span>
          </div>
        ))}
      </div>
      <div className="h-[6px] border-y border-[#a6a4ae] bg-[#f7f3f7]" />
      <div className="ml-[5px] bg-[#f7f3f7] text-[9.350px] leading-[13.650px]">
        <div className="pl-[2px]">Frame 107: 76 bytes on wire (608 bits), 76 bytes captured (608 bits)</div>
        <div className="pl-[2px]">Ethernet II, Src: Microsof_01:82:02 (00:15:5d:01:82:02), Dst: Micros</div>
        <div className="pl-[2px]">Internet Protocol Version 4, Src: 10.1.16.1, Dst: 10.1.24.101</div>
        <div className="pl-[2px]">User Datagram Protocol, Src Port: 53, Dst Port: 61105</div>
        <div className="bg-[#f8f352] pl-[2px]">Domain Name System (response)</div>
      </div>
    </div>
  );
}

function LabPanel() {
  return (
    <div className={"flex w-[496px] shrink-0 flex-col bg-white " + SANS}>
      <div className="flex h-[90px] shrink-0 justify-between bg-[#007c36] pl-[15px] pr-[20px] text-white">
        <div className="pt-[19px]">
          <div className="flex h-[26px] items-center text-[17px]"><T c="w-[416px]">14: Assisted Lab: Analyze Application Security Configu</T></div>
          <div className="mt-[4px] flex h-[24px] items-center text-[15px]"><T c="w-[148px]">29 Minutes Remaining</T></div>
        </div>
        <div className="mt-[26px] flex h-[15px] w-[25px] flex-col justify-between">
          <i className="h-[2px] bg-white" />
          <i className="h-[2px] bg-white" />
          <i className="h-[2px] bg-white" />
        </div>
      </div>
      <div className="flex h-[50px] shrink-0 bg-[#eee] text-[17px] text-[#111]">
        <div className="flex h-[50px] w-[111px] items-center border-b-[5px] border-[#007c36] pl-[9px] pt-[6px]"><T c="w-[90px]">Instructions</T></div>
        <div className="flex h-[50px] grow items-center">
          <T c="ml-[17px] mt-px w-[77px]">Resources</T>
          <T c="ml-[30px] mt-px w-[36px]">Help</T>
          <svg viewBox="0 0 20 20" className="mb-[2px] ml-[14px] h-[20px] w-[20px]" fill="none" stroke="#333" strokeWidth="1.300">
            <circle cx="7" cy="7" r="6" />
            <path d="M11.500 11.500l8 8" />
          </svg>
          <div className="mb-[2px] ml-[6px] flex h-[6px] w-[125px] items-center rounded-full bg-[#ddd] pl-[15px]">
            <i className="h-[19px] w-[19px] rounded-full bg-[#999]" />
          </div>
          <T c="ml-[5px] w-[36px] text-[15px]">100%</T>
        </div>
      </div>
      <div className="flex h-[858px] shrink-0 overflow-hidden">
        <div className="w-[475px] shrink-0 overflow-hidden pl-[71px] text-[18px] leading-[23.300px] text-[#111]">
          <div className="-mt-[6px] flex flex-col">
            <T c="w-[360px]">Does this capture indicate that DNS is a TCP or</T>
            <T c="w-[112px]">UDP protocol?</T>
          </div>
          <div className="h-[15px]" />
          <Choices pick={1} />
          <div className="h-[14px]" />
          <ScoreAndResult />
          <div className="mt-[36px] flex h-[22px] items-center">
            <svg viewBox="0 0 12 10" className="h-[10px] w-[12px]"><path d="M0 0h12L6 10z" fill="#000" /></svg>
            <T c="ml-[5px] w-[97px]">TCP or UDP?</T>
          </div>
          <CaptureSample />
          <div className="-ml-[57px] mt-[20px] flex h-[25px] items-center">
            <div className="flex h-[19px] w-[19px] items-center justify-center border border-[#3093e8] bg-[#008000]">
              <svg viewBox="0 0 14 10" className="h-[10px] w-[13px]" fill="none"><path d="M1 5l4 4 8-8" stroke="#fff" strokeWidth="1.500" /></svg>
            </div>
            <T c="ml-[20px] w-[13px]">4.</T>
            <T c="ml-[5px] w-[79px]">Next, type</T>
            <div className="ml-[6px] mt-[8px] flex h-[24px] w-[24px] items-center justify-center border border-black text-[18px] font-['Liberation_Serif',serif]">T</div>
            <div className={"ml-[4px] flex h-[25px] w-[157px] items-center bg-[#eee] pl-[6px] text-[16px] " + MONO}>
              <T c="w-[145px]">tcp<span className="text-[#666600]">.</span>port <span className="text-[#666600]">==</span> <span className="text-[#006666]">143</span></T>
            </div>
            <T c="ml-[5px] w-[106px]">in the Display</T>
          </div>
          <div className="mt-px flex flex-col">
            <T c="w-[380px]">filter. This filter checks for TCP packets associated</T>
            <div className="flex">
              <T c="w-[152px]">with port 143. Press</T>
              <T c="ml-[5px] w-[43px] font-bold text-black">Enter</T>
              <T c="ml-[5px] w-[172px]">to display the capture.</T>
            </div>
          </div>
          <div className="mt-[30px] flex flex-col">
            <T c="w-[367px]">Does this capture indicate that IMAP is a TCP or</T>
            <T c="w-[112px]">UDP protocol?</T>
          </div>
          <div className="h-[14px]" />
          <Choices pick={0} />
          <div className="h-[15px]" />
          <ScoreAndResult />
        </div>
        <div className="flex w-[21px] shrink-0 flex-col items-center bg-[#f1f1f1]">
          <svg viewBox="0 0 9 5" className="mt-[9px] h-[5px] w-[9px]"><path d="M0 5h9L4.500 0z" fill="#505050" /></svg>
          <i className="mt-[154px] h-[241px] w-[17px] bg-[#c1c1c1]" />
          <svg viewBox="0 0 9 5" className="mb-[9px] mt-auto h-[5px] w-[9px]"><path d="M0 0h9L4.500 5z" fill="#505050" /></svg>
        </div>
      </div>
      <div className="flex h-[74px] shrink-0 items-center bg-[#eee] pl-[19px] pr-[25px] pt-[1px] text-[17px] text-[#111]">
        <svg viewBox="0 0 11 18" className="h-[18px] w-[11px]" fill="none"><path d="M10 .7L1.500 9l8.500 8.300" stroke="#222" strokeWidth="1.300" /></svg>
        <T c="ml-[11px] w-[66px]">Previous</T>
        <T c="ml-auto w-[244px]">Next: Comprehensive questions</T>
        <svg viewBox="0 0 11 18" className="ml-[9px] h-[18px] w-[11px]" fill="none"><path d="M1 .7L9.500 9 1 17.300" stroke="#222" strokeWidth="1.300" /></svg>
      </div>
    </div>
  );
}

/* ---------- host taskbar ---------- */

function HostTaskbar() {
  return (
    <div className={"flex h-[60px] shrink-0 items-center border-t border-[#a6aebd] bg-[#d7e0f7] text-[#1a1a1a] " + SANS}>
      <svg viewBox="0 0 28 28" className="ml-[26px] h-[28px] w-[28px]">
        <defs>
          <linearGradient id="moon" x1="0.6" y1="0" x2="0.4" y2="1">
            <stop offset="0" stopColor="#f8c64c" />
            <stop offset="1" stopColor="#ee7a1b" />
          </linearGradient>
        </defs>
        <path d="M18.500 0C30 5 30 20 21 25.500 14 30 4 27.500 0 19c11 2 20-7 18.500-19z" fill="url(#moon)" />
      </svg>
      <div className="mb-[2px] ml-[10px] flex flex-col text-[14px] leading-[20px]">
        <T c="w-[35px]">-15°C</T>
        <T c="w-[34px] text-[#555]">Clear</T>
      </div>
      <svg viewBox="0 0 29 29" className="ml-[478px] h-[29px] w-[29px]">
        <defs>
          <linearGradient id="win" x1="0" y1="0" x2="1" y2="1">
            <stop offset="0" stopColor="#53d0ff" />
            <stop offset="1" stopColor="#0067c4" />
          </linearGradient>
        </defs>
        <path d="M0 0h14v14H0zM15 0h14v14H15zM0 15h14v14H0zM15 15h14v14H15z" fill="url(#win)" />
      </svg>
      <div className="ml-[18px] flex h-[38px] w-[123px] items-center rounded-full bg-[#f1f5fd] pl-[28px] shadow-[0_1px_1px_#c3cce0]">
        <svg viewBox="0 0 18 18" className="h-[17px] w-[17px]" fill="none" stroke="#1b1b1b" strokeWidth="1.600">
          <circle cx="7.500" cy="7" r="6" />
          <path d="M11.800 11.800l5.500 5.500" />
        </svg>
        <T c="ml-[7px] w-[45px] text-[15px]">Search</T>
      </div>
      <svg viewBox="0 0 30 28" className="ml-[18px] h-[28px] w-[30px]">
        <rect x="0" y="7" width="23" height="21" rx="1.500" fill="#2b2b2b" />
        <rect x="8" y="0" width="22" height="20" rx="1.500" fill="#fff" opacity="0.850" />
        <path d="M8 7h15v13H8z" fill="#a9a9a9" />
      </svg>
      <svg viewBox="0 0 29 29" className="ml-[25px] h-[29px] w-[29px]">
        <path d="M14.500 0a14 14 0 1 1-5 27L1 28.500 2.500 22A14 14 0 0 1 14.500 0z" fill="#6557c8" />
        <rect x="6.500" y="8.500" width="11" height="11" rx="2" fill="#fff" />
        <path d="M18.500 12.500l4.500-3v9l-4.500-3z" fill="#fff" />
      </svg>
      <div className="mb-px ml-[26px] flex h-[49px] w-[30px] flex-col items-center justify-end">
        <svg viewBox="0 0 30 27" className="mb-[6px] h-[27px] w-[30px]">
          <path d="M0 2a2 2 0 0 1 2-2h8l3 3H0z" fill="#d99b0b" />
          <path d="M0 5h10l2.500-2H28a2 2 0 0 1 2 2v20.500H0z" fill="#fbcb3c" />
          <path d="M5 27v-6a2 2 0 0 1 2-2h16a2 2 0 0 1 2 2v6z" fill="#1683d0" />
          <path d="M9.500 22h11" stroke="#0b4e86" strokeWidth="1.500" />
        </svg>
        <i className="h-[4px] w-[8px] rounded-full bg-[#74798a]" />
      </div>
      <div className="ml-[16px] flex h-[48px] w-[47px] flex-col items-center justify-end rounded-[5px] bg-[#eef2fc] shadow-[1px_0_0_#c6cfe4]">
        <EdgeIcon c="mb-[5px] h-[31px] w-[31px]" />
        <i className="h-[4px] w-[20px] rounded-full bg-[#0078d4]" />
      </div>
      <svg viewBox="0 0 30 30" className="ml-[17px] h-[30px] w-[30px]">
        <path d="M8 7V3a2 2 0 0 1 2-2h10a2 2 0 0 1 2 2v4" fill="none" stroke="#24b6ec" strokeWidth="2" />
        <path d="M1 6h28v20a3 3 0 0 1-3 3H4a3 3 0 0 1-3-3z" fill="#17548f" />
        <path d="M10 12h5v5h-5z" fill="#f25022" /><path d="M16 12h5v5h-5z" fill="#7fba00" />
        <path d="M10 18h5v5h-5z" fill="#00a4ef" /><path d="M16 18h5v5h-5z" fill="#ffb900" />
      </svg>
      <div className="ml-[25px] flex h-[30px] w-[30px] items-center justify-center rounded-full border-2 border-black text-[10px] font-bold tracking-[-0.5px] text-black font-['Liberation_Sans',sans-serif]">
        <T c="w-[24px]">D<span className="inline-block -rotate-[30deg]">E</span>LL</T>
      </div>
      <div className="ml-[25px] flex h-[30px] w-[30px] items-center justify-center bg-[#0078d7]">
        <svg viewBox="0 0 16 16" className="h-[15px] w-[15px]" fill="none"><path d="M5.500 14A6.500 6.500 0 1 1 10.500 14" stroke="#00cfff" strokeWidth="2" /></svg>
      </div>
      <svg viewBox="0 0 28 30" className="ml-[26px] h-[30px] w-[28px]">
        <path d="M0 0l14 6.500L28 0v23.500L14 30 0 23.500z" fill="#c8202f" />
        <path d="M6.500 9.500L14 13l7.500-3.500V19L14 22.500 6.500 19z" fill="#d7e0f7" />
      </svg>
      <svg viewBox="0 0 30 30" className="ml-[26px] h-[30px] w-[30px]">
        <path d="M0 0h14.500v14.500H0z" fill="#f25022" /><path d="M15.500 0H30v14.500H15.500z" fill="#7fba00" />
        <path d="M0 15.500h14.500V30H0z" fill="#00a4ef" /><path d="M15.500 15.500H30V30H15.500z" fill="#ffb900" />
      </svg>
      <div className="mb-px ml-[25px] flex h-[49px] w-[29px] flex-col items-center justify-end">
        <svg viewBox="0 0 29 28" className="mb-[6px] h-[28px] w-[29px]">
          <path d="M7 0h20a2 2 0 0 1 2 2v5H7z" fill="#3f9fe6" /><path d="M7 7h22v7H7z" fill="#2b7cd3" />
          <path d="M7 14h22v7H7z" fill="#185abd" /><path d="M7 21h22v5a2 2 0 0 1-2 2H7z" fill="#103f91" />
          <rect x="0" y="6" width="16" height="16" rx="1.500" fill="#1b5cbe" />
          <text x="8" y="18.500" fontSize="12.500" fontWeight="bold" textAnchor="middle" fill="#fff" fontFamily="Open Sans">W</text>
        </svg>
        <i className="h-[4px] w-[8px] rounded-full bg-[#74798a]" />
      </div>
      <div className="mb-px ml-[26px] flex h-[49px] w-[30px] flex-col items-center justify-end">
        <svg viewBox="0 0 30 30" className="mb-[5px] h-[30px] w-[30px]">
          <rect x="0" y="0" width="22" height="22" rx="3" fill="#efefef" />
          <path d="M4 16V4.500h13" fill="none" stroke="#d13f12" strokeWidth="3" strokeDasharray="3 1.800" />
          <path d="M16 7v10.500h8M10 15l6 4" fill="none" stroke="#878787" strokeWidth="2.600" />
          <circle cx="27" cy="16" r="2.600" fill="none" stroke="#2196dc" strokeWidth="1.600" />
          <circle cx="16" cy="26.500" r="2.600" fill="none" stroke="#2196dc" strokeWidth="1.600" />
          <path d="M16.500 18v6M19 17.500l5-1" stroke="#2196dc" strokeWidth="1.500" />
        </svg>
        <i className="h-[4px] w-[8px] rounded-full bg-[#74798a]" />
      </div>
      <svg viewBox="0 0 16 9" className="ml-auto h-[9px] w-[16px]" fill="none"><path d="M.7 8.300L8 1l7.300 7.300" stroke="#222" strokeWidth="1.500" /></svg>
      <div className="ml-[21px] flex w-[28px] flex-col items-center text-[14px] leading-[20px]">
        <T c="w-[28px]">ENG</T>
        <T c="w-[18px]">US</T>
      </div>
      <svg viewBox="0 0 80 16" className="ml-[23px] h-[16px] w-[80px]" fill="none" stroke="#1b1b1b" strokeWidth="1.400">
        <path d="M.7 6C6-.3 14-.3 19.300 6M3.500 8.800c3.800-4.300 9.200-4.300 13 0M6.300 11.500c2.200-2.500 5.200-2.500 7.400 0" />
        <circle cx="10" cy="13.800" r="1.300" fill="#1b1b1b" />
        <path d="M30.700 5.500h3.300L38 1.500v13l-4-4h-3.300zM41 5.500c1.200 1.500 1.200 3.500 0 5M44 3.300c2.200 3 2.200 6.500 0 9.500M47 1.300c3.300 4 3.300 9.500 0 13.500" />
        <rect x="60.700" y="3" width="16" height="10.500" rx="2" strokeWidth="1.600" />
        <path d="M78.500 6.500v3.500M63.800 5.500v5.500" strokeWidth="2.400" />
      </svg>
      <div className="mb-[2px] ml-[21px] mr-[19px] flex flex-col items-end text-[14px] leading-[20px]">
        <T c="w-[54px]">1:50 AM</T>
        <T c="w-[75px]">2022-12-04</T>
      </div>
    </div>
  );
}

export default function App() {
  return (
    <div className={"flex h-[1200px] w-[1920px] flex-col overflow-hidden bg-white " + SANS}>
      <BrowserChrome />
      <div className="flex h-[1072px] shrink-0">
        <div className="flex w-[1424px] shrink-0 flex-col bg-[#434343]">
          <VmBar />
          <div className="relative flex grow border-r-4 border-black">
            <VmDesktop />
            <div className="absolute -right-[9px] top-[501px] z-10 flex h-[23px] w-[14px] items-center justify-center gap-[2px] rounded-[3px] bg-black">
              <i className="h-[19px] w-[3px] bg-[#777]" />
              <i className="h-[19px] w-[3px] bg-[#777]" />
            </div>
          </div>
        </div>
        <LabPanel />
      </div>
      <HostTaskbar />
    </div>
  );
}
